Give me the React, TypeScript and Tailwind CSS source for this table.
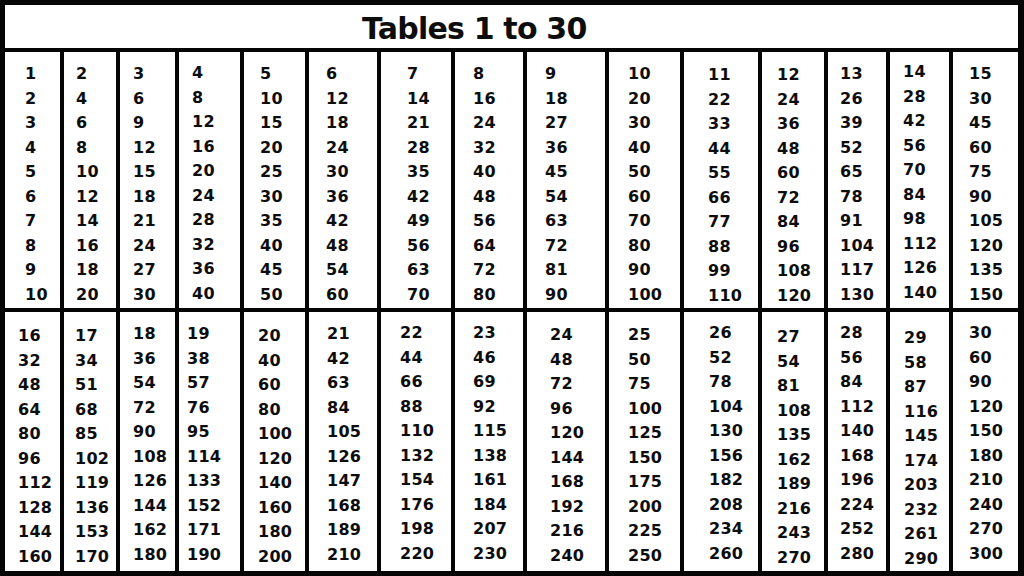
import React from "react";

const top = [
  "pl-[20px] pt-[10px]",
  "pl-[12px] pt-[10px]",
  "pl-[13px] pt-[10px]",
  "pl-[13px] pt-[9px]",
  "pl-[16px] pt-[10px]",
  "pl-[17px] pt-[10px]",
  "pl-[26px] pt-[10px]",
  "pl-[18px] pt-[10px]",
  "pl-[18px] pt-[10px]",
  "pl-[19px] pt-[10px]",
  "pl-[24px] pt-[11px]",
  "pl-[15px] pt-[11px]",
  "pl-[12px] pt-[10px]",
  "pl-[13px] pt-[8px]",
  "pl-[16px] pt-[10px]",
];

const bottom = [
  "pl-[13px] pt-[12px]",
  "pl-[11px] pt-[12px]",
  "pl-[13px] pt-[10px]",
  "pl-[8px] pt-[10px]",
  "pl-[14px] pt-[12px]",
  "pl-[18px] pt-[10px]",
  "pl-[19px] pt-[9px]",
  "pl-[18px] pt-[9px]",
  "pl-[23px] pt-[11px]",
  "pl-[19px] pt-[11px]",
  "pl-[25px] pt-[9px]",
  "pl-[15px] pt-[13px]",
  "pl-[12px] pt-[9px]",
  "pl-[14px] pt-[14px]",
  "pl-[16px] pt-[9px]",
];

const cols =
  "grid grid-cols-[55px_52px_55px_61px_61px_68px_70px_68px_78px_71px_74px_62px_58px_59px_65px] gap-x-[4px]";

function Row({ start, pads, h }: { start: number; pads: string[]; h: string }) {
  return (
    <div className={`${cols} ${h}`}>
      {pads.map((p, i) => {
        const n = start + i;
        return (
          <div key={i} className={`bg-white ${p}`}>
            {Array.from({ length: 10 }, (_, k) => (
              <div
                key={k}
                className="leading-[24.5px] h-[24.5px] text-[16px] font-bold tracking-[0.3px] text-[#0d0d0d]"
              >
                {n * (k + 1)}
              </div>
            ))}
          </div>
        );
      })}
    </div>
  );
}

export default function App() {
  return (
    <div
      className="w-[1024px] h-[576px] bg-[#050505] pt-[5px] pl-[5px] pr-[6px] pb-[7px] flex flex-col overflow-hidden"
      style={{ fontFamily: '"DejaVu Sans", sans-serif' }}
    >
      <div className="h-[43px] bg-white flex items-center pl-[357px]">
        <span className="text-[30px] font-bold tracking-[-0.8px] text-[#0d0d0d] leading-none pt-[5px]">
          Tables 1 to 30
        </span>
      </div>
      <div className="h-[4px]" />
      <Row start={1} pads={top} h="h-[255px]" />
      <div className="h-[5px]" />
      <Row start={16} pads={bottom} h="h-[257px]" />
    </div>
  );
}
